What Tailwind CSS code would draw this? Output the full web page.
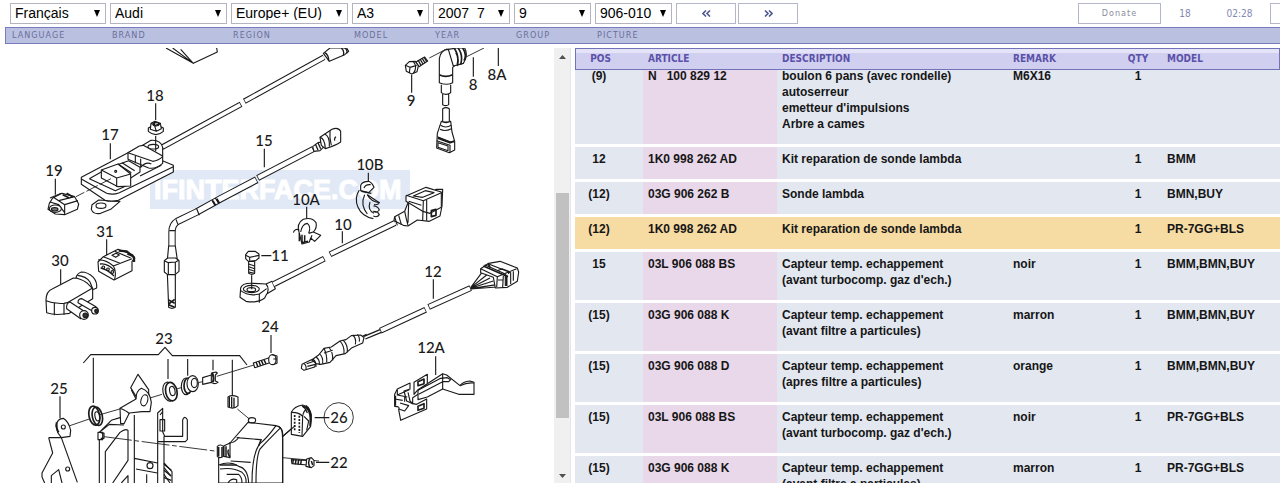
<!DOCTYPE html>
<html lang="fr">
<head>
    <meta charset="utf-8">
    <meta name="viewport" content="width=device-width, initial-scale=1">
    <title>Parts catalogue - Audi A3 906-010</title>
    <script src="https://cdn.jsdelivr.net/npm/@tailwindcss/browser@4"></script>
</head>
<body class="h-screen flex flex-col overflow-hidden bg-white font-['Liberation_Sans',sans-serif] text-black">

<!-- Vehicle selection -->
<header class="shrink-0">
    <div class="flex items-center justify-between h-[27px] pl-[10px]">
        <div class="flex items-center gap-1">
            <div class="relative w-24">
                <select id="language" class="appearance-none block w-full h-[21px] pl-1 pb-[2px] border border-[#b4b4c0] bg-white text-sm leading-none"><option>Français</option></select>
                <svg class="absolute right-[6px] top-[7px] w-[6px] h-[7px] pointer-events-none" viewBox="0 0 6 7"><path d="M0 0h6L3 7z"/></svg>
            </div>
            <div class="relative w-[117px]">
                <select id="brand" class="appearance-none block w-full h-[21px] pl-1 pb-[2px] border border-[#b4b4c0] bg-white text-sm leading-none"><option>Audi</option></select>
                <svg class="absolute right-[6px] top-[7px] w-[6px] h-[7px] pointer-events-none" viewBox="0 0 6 7"><path d="M0 0h6L3 7z"/></svg>
            </div>
            <div class="relative w-[117px]">
                <select id="region" class="appearance-none block w-full h-[21px] pl-1 pb-[2px] border border-[#b4b4c0] bg-white text-sm leading-none"><option>Europe+ (EU)</option></select>
                <svg class="absolute right-[6px] top-[7px] w-[6px] h-[7px] pointer-events-none" viewBox="0 0 6 7"><path d="M0 0h6L3 7z"/></svg>
            </div>
            <div class="relative w-[77px]">
                <select id="model" class="appearance-none block w-full h-[21px] pl-1 pb-[2px] border border-[#b4b4c0] bg-white text-sm leading-none"><option>A3</option></select>
                <svg class="absolute right-[6px] top-[7px] w-[6px] h-[7px] pointer-events-none" viewBox="0 0 6 7"><path d="M0 0h6L3 7z"/></svg>
            </div>
            <div class="relative w-[77px]">
                <select id="year" class="appearance-none block w-full h-[21px] pl-1 pb-[2px] border border-[#b4b4c0] bg-white text-sm leading-none"><option>2007&nbsp; 7</option></select>
                <svg class="absolute right-[6px] top-[7px] w-[6px] h-[7px] pointer-events-none" viewBox="0 0 6 7"><path d="M0 0h6L3 7z"/></svg>
            </div>
            <div class="relative w-[77px]">
                <select id="group" class="appearance-none block w-full h-[21px] pl-1 pb-[2px] border border-[#b4b4c0] bg-white text-sm leading-none"><option>9</option></select>
                <svg class="absolute right-[6px] top-[7px] w-[6px] h-[7px] pointer-events-none" viewBox="0 0 6 7"><path d="M0 0h6L3 7z"/></svg>
            </div>
            <div class="relative w-[77px]">
                <select id="picture" class="appearance-none block w-full h-[21px] pl-1 pb-[2px] border border-[#b4b4c0] bg-white text-sm leading-none"><option>906-010</option></select>
                <svg class="absolute right-[6px] top-[7px] w-[6px] h-[7px] pointer-events-none" viewBox="0 0 6 7"><path d="M0 0h6L3 7z"/></svg>
            </div>
            <div class="flex gap-[2px]">
                <button type="button" aria-label="Previous picture" class="flex items-center justify-center w-[60px] h-[21px] border border-[#b4b6cc] bg-white">
                    <svg class="w-[9px] h-[7px]" viewBox="0 0 9 7" fill="none" stroke="#50598c" stroke-width="1.6"><path d="M4 .5l-3 3 3 3M8 .5l-3 3 3 3"/></svg>
                </button>
                <button type="button" aria-label="Next picture" class="flex items-center justify-center w-[60px] h-[21px] border border-[#b4b6cc] bg-white">
                    <svg class="w-[9px] h-[7px]" viewBox="0 0 9 7" fill="none" stroke="#50598c" stroke-width="1.6"><path d="M1 .5l3 3-3 3M5 .5l3 3-3 3"/></svg>
                </button>
            </div>
        </div>
        <div class="flex items-center font-['DejaVu_Sans_Condensed','DejaVu_Sans',sans-serif] text-[10px] text-[#8288b3]">
            <button type="button" class="w-[83px] h-[21px] border border-[#b4b6cc] bg-white text-[9px] text-[#8c8ca0] tracking-[1px]">Donate</button>
            <span class="w-12 text-center">18</span>
            <span class="w-[61px] text-center">02:28</span>
            <button type="button" aria-label="Menu" class="w-[10px] h-[21px] border border-r-0 border-[#b4b6cc] bg-white"></button>
        </div>
    </div>
    <div class="flex gap-1 items-center h-[17px] ml-[5px] pl-[6px] border border-r-0 border-[#7b7cc0] bg-[#bac1e0] font-['DejaVu_Sans_Condensed','DejaVu_Sans',sans-serif] text-[9px] tracking-[1px] text-[#6a6e9c]">
        <label for="language" class="w-24">LANGUAGE</label>
        <label for="brand" class="w-[117px]">BRAND</label>
        <label for="region" class="w-[117px]">REGION</label>
        <label for="model" class="w-[77px]">MODEL</label>
        <label for="year" class="w-[77px]">YEAR</label>
        <label for="group" class="w-[77px]">GROUP</label>
        <label for="picture" class="w-[77px]">PICTURE</label>
    </div>
</header>

<main class="flex flex-1 min-h-0 pt-1">
    <!-- Exploded view -->
    <section class="flex w-[571px] shrink-0 border-r border-[#e4e4ea]">
        <div class="flex-1 overflow-hidden">
            <svg class="block w-[554px] h-[435px]" viewBox="0 48 554 435" fill="none" stroke="#1a1a1a" stroke-linejoin="round">
                <!-- watermark -->
                <rect x="150" y="170" width="260" height="39" fill="#e1e9f7" stroke="none"/>
                <text x="154" y="199" fill="#fff" stroke="#fff" stroke-width="1" font-size="27" font-weight="700" font-family="'Liberation Sans',sans-serif">IFINTERFACE.COM</text>

                <!-- 17, 18, 19: sender with lead -->
                <g transform="translate(40 48) scale(.33333)" stroke-width="3.4">
                    <path fill="#fff" d="M378 0l82 46 72-34-2-12M398 0l62 46-38-42"/>
                    <path d="M366 298L603 169M613 160L852 28" stroke-width="17"/>
                    <path d="M368 297L601 170M615 159L852 28" stroke="#fff" stroke-width="11"/>
                    <path fill="#fff" d="M156 470l20-14 64 4-28 24-30 12q-22 4-28-12z"/>
                    <ellipse cx="183" cy="473" rx="15" ry="8" fill="#fff"/>
                    <path fill="#fff" d="M124 388l160-84 116 48v20l-165 85q-20 5-40 0l-71-48z"/>
                    <path d="M124 393l76 43q20 6 38-2l162-78M148 392l78 36 40-18M148 392l50-28M300 384l64-32"/>
                    <path fill="#fff" d="M303 295l30-18q30-2 35 22v24l-30 5z"/>
                    <ellipse cx="340" cy="296" rx="16" ry="7"/>
                    <path fill="#fff" d="M264 314l34-20 12-2 58 32v22q-20 18-42 14l-62-26z"/>
                    <path d="M264 314l74 26q18-2 30-14M286 324v22M302 332v26q16-18 32-10"/>
                    <path fill="#fff" d="M232 350l34-12 34 20v14l-28 18-40-20z"/>
                    <path fill="#fff" d="M184 366l50-18 38 30v36l-38 2-50-26z"/>
                    <path d="M184 366l46 24 42-12M230 390v26M234 348l40 26M246 344l38 24"/>
                    <circle cx="227" cy="370" r="3"/>
                    <path d="M213 392L108 446" stroke-width="2.6" stroke-dasharray="38 7"/>
                    <path d="M347 166v50M347 264v46M211 286v48M46 392v48M673 302v56"/>
                    <path fill="#fff" d="M325 240q22-14 45 0v10q-22 20-45 0z"/>
                    <path fill="#fff" d="M333 226l12-6 16 6 3 16-15 8-18-6zM345 220l-2 10 6 20M333 226l12 6 18-5"/>
                    <ellipse cx="348" cy="229" rx="9" ry="5"/>
                    <path fill="#fff" d="M28 466l10-16 28-14 38 10 12 22-4 16-38 16-28-2-22-14z"/>
                    <path d="M30 450l34-14M38 446l18 12 48-12M56 458l18 12 40-12M74 470v28M30 462l26 8 18 24"/>
                    <path d="M80 436l18 10M68 440l20 10" stroke-width="5"/>
                    <ellipse cx="46" cy="482" rx="18" ry="11" fill="#fff"/>
                    <ellipse cx="44" cy="484" rx="10" ry="5" fill="#777"/>
                </g>

                <!-- 8, 9: sender; end of leads 15 and 18 -->
                <g transform="translate(280 48) scale(.33333)" stroke-width="3.4">
                    <path fill="#fff" d="M130 16l18 24 46-20 12-10-6-10h-50z"/>
                    <path d="M134 14q12 6 12 24M184 0q10 8 6 22M194 0q10 6 6 16" stroke-width="4"/>
                    <path d="M448 30L502 2M548 32L612 0" stroke-width="2.6"/>
                    <path fill="#fff" d="M408 42l26-15 9 12-26 17z"/>
                    <path d="M414 36l9 16M420 33l9 15M426 30l9 15M432 27l8 14" stroke-width="4"/>
                    <path fill="#fff" d="M376 52l12-11 18-1 9 14-4 17-16 7-16-8z"/>
                    <path d="M376 52l14 6 20-6M390 58l-2 17M400 40q14 18 0 36"/>
                    <path d="M395 80v54M580 28v58M655 0v54"/>
                    <path fill="#fff" d="M478 104V32q4-28 28-28l22 12 8 28-18 14v46q-18 10-40 0z"/>
                    <path fill="#fff" d="M505 4l25-4h24q12 22-4 46l-30 8z"/>
                    <path d="M478 80q18 10 40 0M522 0q16 22 10 50M534 0q16 20 8 50M548 0q14 20 4 38M528 14q10 16 4 40" stroke-width="5"/>
                    <path fill="#fff" d="M484 110v24q12 10 28 0v-24M488 138v32q10 6 18 0v-32M488 182v40h20v-40q-10-6-20 0z"/>
                    <path fill="#fff" d="M484 220q14 8 28 0l4 32 8 28v26l-16 8-38-14 2-44z"/>
                    <path d="M482 232q14 10 32 0M480 244q16 8 34-2M472 266l40 16 12-4M470 278l40 14v22M474 284v14l30 10v-14z"/>
                    <path d="M474 270l36 14 12-4" stroke-width="6"/>
                    <path d="M-67 390L100 303" stroke-width="19"/>
                    <path d="M-65 389L98 304" stroke="#fff" stroke-width="13"/>
                    <path fill="#fff" d="M98 296l16-12 10-2 8 14-12 12-18 2z"/>
                    <path d="M106 288l8 18M114 284l8 18M122 280l8 18" stroke-width="4"/>
                    <path fill="#fff" d="M120 268l36-24q18-8 26 6v32q-18 12-46 20l-12-10z"/>
                    <path d="M120 268q14 2 16 34M134 258q16 6 14 38M150 248q-2 20 4 44M168 266q-6 4-4 12"/>
                    <path d="M265 374v28"/>
                    <!-- 10B -->
                    <path d="M238 426q-16 24-4 52t46 34M254 440q-14 30 8 58M262 440l36 24"/>
                    <path fill="#fff" d="M242 412q4-12 24-12 10 4 16 18l-16 16-24-6z"/>
                    <path d="M252 420q4-12 20-10M244 430l30 6M262 440q10 20 36 24-4 8-16 6M270 462q-8 24 12 34M280 474q14 0 18 12-8 10-18 4M280 490q14 0 18 10-6 10-18 4"/>
                </g>

                <!-- 30, 31, 11 and temperature probe -->
                <g transform="translate(40 200) scale(.33333)" stroke-width="3.4">
                    <path d="M650-61L542-4 470 36 412 64q-16 10-16 32v44" stroke-width="22"/>
                    <path d="M648-60L542-4 470 36 412 64q-16 10-16 32v42" stroke="#fff" stroke-width="16"/>
                    <path d="M470 26l8 20M516 0l10 16M526-6l10 16M408 58l6 16M388 92h18" />
                    <path d="M518 2l8 14M530-4l8 14" stroke-width="6"/>
                    <path fill="#fff" d="M386 138h20l6 42h-30zM382 218h24v104q-10 6-20 0z"/>
                    <path fill="#fff" d="M373 182l10-8h24l10 8v32l-12 10h-22l-10-8z"/>
                    <path d="M373 182l12 6 22-2 10-6M385 188v34M406 187v34"/>
                    <path d="M386 300l18 10M404 298l-18 14M386 314l18 8" stroke-width="5"/>
                    <path d="M200 118v66M62 208v48M664 167h30"/>
                    <!-- 31 -->
                    <path fill="#fff" d="M174 186l16-16 44-22 44 16 6 12-8 8v28l-54 28-46-26z"/>
                    <path d="M174 180q22-2 46 18l56-22M220 198q10 14 4 40M190 170l50 20M224 154l48 20M216 166l12-6 10 5-11 7z"/>
                    <path d="M236 152l24 2 22 18v14M262 160l16 8" stroke-width="7"/>
                    <path d="M180 192q22-4 44 20M182 204q20 4 40 24" stroke-width="4"/>
                    <circle cx="190" cy="202" r="4"/><circle cx="204" cy="208" r="4"/><circle cx="217" cy="216" r="4"/>
                    <!-- 30 -->
                    <path fill="#fff" d="M108 232q4-12 16-16 20 0 36 16 12 14 10 32l-14 6z"/>
                    <path fill="#fff" d="M18 300q0-26 20-34l62-32q20 0 40 14l18 18v30l-70 44-16 2q-30 4-52-4z"/>
                    <path d="M18 302q24 10 54 8l10-2 76-44M43 310v36M72 310v34M112 226q26 2 38 20l8 20"/>
                    <path fill="#fff" d="M90 306q-12 4-10 20l42 30 14-20z"/>
                    <path fill="#fff" d="M126 296q-12 0-12 12l44 26 10-14z"/>
                    <circle cx="132" cy="345" r="13" fill="#fff"/><circle cx="136" cy="346" r="7" fill="#333"/>
                    <circle cx="165" cy="332" r="10" fill="#fff"/><circle cx="169" cy="333" r="5" fill="#333"/>
                    <!-- 11 -->
                    <path fill="#fff" d="M617 164l8-10h20l12 8v12l-10 8-22 2-8-8zM626 184h18v36q-8 6-18 0z"/>
                    <path d="M617 166l12 6 28-6M629 172v10M626 192l18 6M626 200l18 6M626 208l18 6M626 216l18 4"/>
                    <path fill="#fff" d="M602 264q4-16 38-14l38 2 18-8 10 22-26 16-6 12q-20 16-56 10l-18-12z"/>
                    <path d="M602 272q24 18 56 10v26M658 282l22-16M678 252q10 10 4 28"/>
                    <ellipse cx="634" cy="267" rx="24" ry="11"/><ellipse cx="634" cy="269" rx="13" ry="6"/>
                    <path d="M635 226v42"/>
                </g>

                <!-- 10A, 10, 12 -->
                <g transform="translate(280 200) scale(.33333)" stroke-width="3.4">
                    <path d="M80 20v36M187 94v36M460 238v58"/>
                    <path fill="#fff" d="M58 100q-10-30 12-42 26-8 38 10 4 16-8 28l22 10-18 18-12-10-4 12-22 6z"/>
                    <path d="M62 96q4-24 20-26 12 10 4 30M40 98q4-14 18-8M86 100l14-4M96 106l-4 10"/>
                    <path d="M58 100v24M66 104v26M74 106v22M66 128l18-4" stroke-width="4.5"/>
                    <path d="M-18 252L133 176M150 163L345 69" stroke-width="18"/>
                    <path d="M-20 253L131 177M152 162L345 69" stroke="#fff" stroke-width="12"/>
                    <path fill="#fff" d="M344 50l30-16 12-30 24-12 34 4 24-28h20l-2 50-6 30-32 16-36-4-28 18-14-2-28-14z"/>
                    <path fill="#fff" d="M378-12l60-26 46 14v46l-34 18-22-6-50-30z"/>
                    <path d="M344 50l8 26M356 46l8 28M374 34q4 20 10 42M386 4l38 12M378-14l52 16 54-24M400-12l36-16 26 6-34 14zM430 2l-2 60M440 0v62M386 8l-2 60"/>
                    <path d="M454 32v18l14-4v-18z" stroke-width="5"/>
                    <path d="M301 392L437 329M446 321L572 264" stroke-width="18"/>
                    <path d="M303 391L435 330M448 320L570 265" stroke="#fff" stroke-width="12"/>
                    <path d="M572 263l34-46M572 263l48-38M572 264l58-30M572 265l68-22M572 266l78-12M572 267l78-6"/>
                    <path fill="#fff" d="M602 206l24-16 34-6 52 20 4 12-4 28-30 18-36 2-6-32-38-14z"/>
                    <path d="M602 206l50 24 58-24M652 230l-2 32M614 194l62 28v36M626 192l66 26v34M670 228l-2 34M654 240h14M652 212l14-6 20 8v8M700 214v28"/>
                    <path d="M610 198l74 32M624 190l6 12M680 224v34" stroke-width="5"/>
                </g>

                <!-- 23, 25: bracket and control unit -->
                <g transform="translate(40 333) scale(.33333)" stroke-width="3.4">
                    <path d="M130 90l22-25h203l20-22 22 25h202l22 28M160 74v136M384 78v60M443 78v50M519 80v32M577 80v106M693 6v54M60 190v66"/>
                    <path d="M78 282l70-24M170 248l76-22M314 200l52-16M408 168l24-6M470 150l18-4M530 130l112-34" stroke-width="2.6"/>
                    <!-- screw 24 -->
                    <path fill="#fff" d="M640 90l48-16 6 14-50 16z"/>
                    <path d="M648 87l6 15M656 84l6 15M664 82l6 14M672 80l6 13" stroke-width="4.5"/>
                    <ellipse cx="697" cy="80" rx="11" ry="15" fill="#fff"/>
                    <path d="M697 65l14 4v22l-12 4M700 78h12"/>
                    <!-- spacers -->
                    <path fill="#fff" d="M488 134l26-8v22l-26 6zM514 122q14-8 18-2l-6 6v18l8 4q-10 8-20 0z"/>
                    <path d="M516 118q8 18 2 30" stroke-width="6"/>
                    <ellipse cx="438" cy="160" rx="14" ry="25" fill="#fff"/>
                    <ellipse cx="444" cy="158" rx="12" ry="23" fill="#fff" stroke-width="5"/>
                    <ellipse cx="458" cy="152" rx="17" ry="24" fill="#fff"/><ellipse cx="463" cy="150" rx="9" ry="14"/>
                    <ellipse cx="386" cy="176" rx="17" ry="29" fill="#fff" transform="rotate(-12 386 176)"/>
                    <ellipse cx="394" cy="176" rx="17" ry="28" fill="#fff" stroke-width="5" transform="rotate(-12 394 176)"/>
                    <ellipse cx="397" cy="174" rx="8" ry="14" transform="rotate(-12 397 174)"/>
                    <ellipse cx="163" cy="248" rx="16" ry="29" fill="#fff" stroke-width="5" transform="rotate(-12 163 248)"/>
                    <ellipse cx="172" cy="250" rx="15" ry="28" stroke-width="5" transform="rotate(-12 172 250)"/>
                    <ellipse cx="172" cy="250" rx="7" ry="14" transform="rotate(-12 172 250)"/>
                    <path d="M564 192q12-8 30 0v26q-12 12-30 4z" fill="#fff"/>
                    <path d="M568 192v30M575 192v32M582 194v30" stroke-width="4"/>
                    <path d="M592 228l36 30" stroke-width="2.6"/>
                    <!-- bracket -->
                    <path fill="#fff" d="M272 164l22-40 32 46v16l-38 4z"/>
                    <path fill="#fff" d="M240 226l48-28q0-24 16-32 26 8 30 42l-4 28h-24l-38 4-16 32h-10z"/>
                    <path d="M288 198l-14-28M240 226q20 8 28 16M252 276l-44-2-30 24M178 298l36-36 26-8"/>
                    <ellipse cx="313" cy="202" rx="10" ry="17" fill="#fff" transform="rotate(15 313 202)"/>
                    <path fill="#fff" d="M174 298h14v22h-14zM182 300h10v16h-10M178 320v130M283 246v130"/>
                    <path d="M353 450V240l15-14v70l6 14h54v-50q6-14 14 0v60l-6 6h-82M372 310v140M360 260h14v34h-14zM360 246l8-10"/>
                    <path d="M196 450v-94l44-58q16-12 24-6v90l-46 68M283 450v-74l70 14M288 408l64 12M320 424v26M244 450l20-22v22M372 390l24 26v34M372 404l20 24M372 424l18 26"/>
                    <path d="M372 394l22 18M372 412l22 18M372 434l22 8" stroke-width="4"/>
                    <circle cx="330" cy="398" r="9"/><circle cx="83" cy="408" r="6"/>
                    <!-- 25 -->
                    <path d="M26 314h38l48 134M26 314l12 46-32 60v12l8 18M34 450v-22l22-18 10 40"/>
                    <path fill="#fff" d="M64 314l26-4 2-18q-6-26-22-36-18 0-22 22l6 22z"/>
                    <path d="M50 268q-2 20 6 30" stroke-width="6"/><circle cx="70" cy="282" r="6"/>
                    <!-- control unit -->
                    <path d="M552 358l285 26" stroke-width="2.6"/>
                    <path fill="#fff" d="M536 450v-84l34-36 54-62 84 10q18 4 20 22v150z"/>
                    <path d="M708 278q-26 36-48 54-24 30-24 118M722 284q-40 40-62 64-12 22-12 102M590 314l72 6M568 330q16 0 30-18M536 396q34-14 60 4 28 6 30 50M540 408q40-6 66 10 14 12 12 32M572 384l60 4M560 424h36q10 8 10 26M564 450q10-16 26-10v10"/>
                    <ellipse cx="636" cy="262" rx="11" ry="8"/>
                    <path fill="#fff" d="M532 340q10-8 18 0v30q-10 8-18 0zM552 338l18-8v44l-18-4z"/>
                    <path d="M536 342v28M546 342v30M558 340v32M566 350q-6 8 4 22M540 396h50M664 318l-8 20" stroke-width="4.5"/>
                    <path d="M192 311l340 44" stroke-dasharray="84 8 14 8" stroke-width="2.6"/>
                    <path d="M728 310l30-26"/>
                </g>

                <!-- 12A, 26, 22 -->
                <g transform="translate(280 333) scale(.33333)" stroke-width="3.4">
                    <path d="M252 10l48-20M256 18l48-20M240 14l20-10" stroke-width="4"/>
                    <path fill="#fff" d="M66 94l28-14 14 10-4 12-32 10-8-6z"/>
                    <path fill="#fff" d="M96 80l20-14 16-20 22-4 26-18 18-4 16-12 28-2 10 8-4 16-32 14-20 18-28 6-18 20-28 6-14-2z"/>
                    <path d="M72 92q8 4 6 18M80 92l24-8M82 100l24-6M98 78q12 8 10 24M108 72q12 8 10 24M118 62q12 10 10 30M132 46q10 22 8 42M146 42q14 16 12 40M180 24q14 16 12 38M190 22q14 14 12 36M218 6q12 10 8 28M232 4q8 8 6 22M132 60l26-8"/>
                    <path d="M467 70v56"/>
                    <path fill="#fff" d="M414 200v-30l28-18 46-30 12 4 40 32q8-12 30-14l12 4v36h-46l-48-16-46 24z"/>
                    <path d="M416 184l72-38h18l6-6-10-6-20 2-68 36M488 122v46M540 158q20-10 42-8"/>
                    <path fill="#fff" d="M414 170l-12 14v-36l40-24v28zM398 212l12 2 30-16v30l-78 34-6-32q6-10-12-10v-36l8-16 38-18v18l-18 6 8 30z"/>
                    <path d="M352 170v16l36-16M352 186l30 6M344 198l24 4M374 192v14M360 210l26 8-12 16-18-6M384 178l6 26 8 8v-18l16-10"/>
                    <path d="M346 188v30M414 146l18-8v14l-18 6zM414 220l18-8v14l-18 6z" stroke-width="5"/>
                    <!-- 26 -->
                    <path fill="#fff" d="M34 238q8-18 34-22 22 4 26 30l-2 34-24 30-34-6z"/>
                    <path d="M36 238q22 0 32 12l-2 58M68 250q2-18 18-28M66 218q12 8 16 22M72 250l14 14-6 28"/>
                    <path d="M68 220q28 4 22 58M78 218q22 22 12 62" stroke-width="5"/>
                    <path d="M44 246v50M58 248v52" stroke-width="5" stroke-dasharray="6 4"/>
                    <path d="M46 278L6 312M-4 280q12 4 12 40v130M104 254h44M108 388h40"/>
                    <circle cx="176" cy="253" r="44" stroke-width="2.6"/>
                    <!-- screw 22 -->
                    <path fill="#fff" d="M34 380l48 2v14l-46-4z"/>
                    <path d="M40 379l-2 14M48 380l-2 14M56 380l-2 15M64 381l-2 14" stroke-width="4.5"/>
                    <path fill="#fff" d="M80 378l14-4 8 8v16l-8 6-16-4z"/>
                    <path d="M90 376q-8 12 0 28M94 384l4 12" stroke-width="4.5"/>
                </g>

                <!-- callout numbers -->
                <g fill="#1a1a1a" stroke="none" font-family="Lato,sans-serif" font-size="15" font-weight="500" text-anchor="middle">
                    <text x="155" y="101">18</text>
                    <text x="110" y="140">17</text>
                    <text x="54" y="176">19</text>
                    <text x="264" y="146">15</text>
                    <text x="411" y="106">9</text>
                    <text x="473" y="90">8</text>
                    <text x="497" y="80">8A</text>
                    <text x="370" y="170">10B</text>
                    <text x="306" y="205">10A</text>
                    <text x="343" y="230">10</text>
                    <text x="280" y="261">11</text>
                    <text x="105" y="237">31</text>
                    <text x="60" y="266">30</text>
                    <text x="433" y="277">12</text>
                    <text x="164" y="344">23</text>
                    <text x="270" y="332">24</text>
                    <text x="431" y="353">12A</text>
                    <text x="59" y="394">25</text>
                    <text x="339" y="423">26</text>
                    <text x="339" y="468">22</text>
                </g>
            </svg>
        </div>
        <div class="flex flex-col items-center w-4 bg-[#f0f0f0]">
            <svg class="mt-[7px] w-[7px] h-[4px]" viewBox="0 0 7 4"><path fill="#505050" d="M0 4h7L3.5 0z"/></svg>
            <div class="mt-[134px] w-[13px] h-[225px] bg-[#c1c1c1]"></div>
            <svg class="mt-auto mb-[5px] w-[7px] h-[4px]" viewBox="0 0 7 4"><path fill="#505050" d="M0 0h7L3.5 4z"/></svg>
        </div>
    </section>

    <!-- Parts list, slightly scrolled under its sticky header -->
    <section class="flex-1 min-w-0 ml-1 overflow-hidden">
        <table class="w-full -mt-[6px] table-fixed border-separate border-spacing-0 text-left text-xs leading-4 font-bold text-[#161616]">
            <thead class="font-['DejaVu_Sans_Condensed','DejaVu_Sans',sans-serif] text-[10px] text-[#5b51a8]">
                <tr class="*:sticky *:top-0 *:h-[22px] *:border-y *:border-[#7272b8] *:bg-linear-to-b *:from-[#e4e3f8] *:from-20% *:to-[#d1cff0] *:to-20%">
                    <th class="w-[68px] border-l pr-[18px] text-center">POS</th>
                    <th class="w-[134px] pl-[5px]">ARTICLE</th>
                    <th class="w-[231px] pl-[5px]">DESCRIPTION</th>
                    <th class="w-[106px] pl-[5px]">REMARK</th>
                    <th class="w-12 text-center">QTY</th>
                    <th class="border-r pl-[5px]">MODEL</th>
                </tr>
            </thead>
            <tbody class="*:*:pt-1 *:*:pb-3 *:*:border-b-3 *:*:border-white *:*:align-top *:*:bg-[#e2e7f0]">
                <tr>
                    <td class="pr-5 text-center">(9)</td>
                    <td class="pl-[5px] bg-[#e8d8ea]!">N &nbsp; 100 829 12</td>
                    <td class="pl-[5px]">boulon 6 pans (avec rondelle)<br>autoserreur<br>emetteur d'impulsions<br>Arbre a cames</td>
                    <td class="pl-[5px]">M6X16</td>
                    <td class="text-center">1</td>
                    <td class="pl-[5px]"></td>
                </tr>
                <tr>
                    <td class="pr-5 text-center">12</td>
                    <td class="pl-[5px] bg-[#e8d8ea]!">1K0 998 262 AD</td>
                    <td class="pl-[5px]">Kit reparation de sonde lambda</td>
                    <td class="pl-[5px]"></td>
                    <td class="text-center">1</td>
                    <td class="pl-[5px]">BMM</td>
                </tr>
                <tr>
                    <td class="pr-5 text-center">(12)</td>
                    <td class="pl-[5px] bg-[#e8d8ea]!">03G 906 262 B</td>
                    <td class="pl-[5px]">Sonde lambda</td>
                    <td class="pl-[5px]"></td>
                    <td class="text-center">1</td>
                    <td class="pl-[5px]">BMN,BUY</td>
                </tr>
                <tr class="*:bg-[#f6dba3]!">
                    <td class="pr-5 text-center">(12)</td>
                    <td class="pl-[5px] bg-[#e8d8ea]!">1K0 998 262 AD</td>
                    <td class="pl-[5px]">Kit reparation de sonde lambda</td>
                    <td class="pl-[5px]"></td>
                    <td class="text-center">1</td>
                    <td class="pl-[5px]">PR-7GG+BLS</td>
                </tr>
                <tr>
                    <td class="pr-5 text-center">15</td>
                    <td class="pl-[5px] bg-[#e8d8ea]!">03L 906 088 BS</td>
                    <td class="pl-[5px]">Capteur temp. echappement<br>(avant turbocomp. gaz d'ech.)</td>
                    <td class="pl-[5px]">noir</td>
                    <td class="text-center">1</td>
                    <td class="pl-[5px]">BMM,BMN,BUY</td>
                </tr>
                <tr>
                    <td class="pr-5 text-center">(15)</td>
                    <td class="pl-[5px] bg-[#e8d8ea]!">03G 906 088 K</td>
                    <td class="pl-[5px]">Capteur temp. echappement<br>(avant filtre a particules)</td>
                    <td class="pl-[5px]">marron</td>
                    <td class="text-center">1</td>
                    <td class="pl-[5px]">BMM,BMN,BUY</td>
                </tr>
                <tr>
                    <td class="pr-5 text-center">(15)</td>
                    <td class="pl-[5px] bg-[#e8d8ea]!">03G 906 088 D</td>
                    <td class="pl-[5px]">Capteur temp. echappement<br>(apres filtre a particules)</td>
                    <td class="pl-[5px]">orange</td>
                    <td class="text-center">1</td>
                    <td class="pl-[5px]">BMM,BMN,BUY</td>
                </tr>
                <tr>
                    <td class="pr-5 text-center">(15)</td>
                    <td class="pl-[5px] bg-[#e8d8ea]!">03L 906 088 BS</td>
                    <td class="pl-[5px]">Capteur temp. echappement<br>(avant turbocomp. gaz d'ech.)</td>
                    <td class="pl-[5px]">noir</td>
                    <td class="text-center">1</td>
                    <td class="pl-[5px]">PR-7GG+BLS</td>
                </tr>
                <tr>
                    <td class="pr-5 text-center">(15)</td>
                    <td class="pl-[5px] bg-[#e8d8ea]!">03G 906 088 K</td>
                    <td class="pl-[5px]">Capteur temp. echappement<br>(avant filtre a particules)</td>
                    <td class="pl-[5px]">marron</td>
                    <td class="text-center">1</td>
                    <td class="pl-[5px]">PR-7GG+BLS</td>
                </tr>
            </tbody>
        </table>
    </section>
</main>

</body>
</html>
